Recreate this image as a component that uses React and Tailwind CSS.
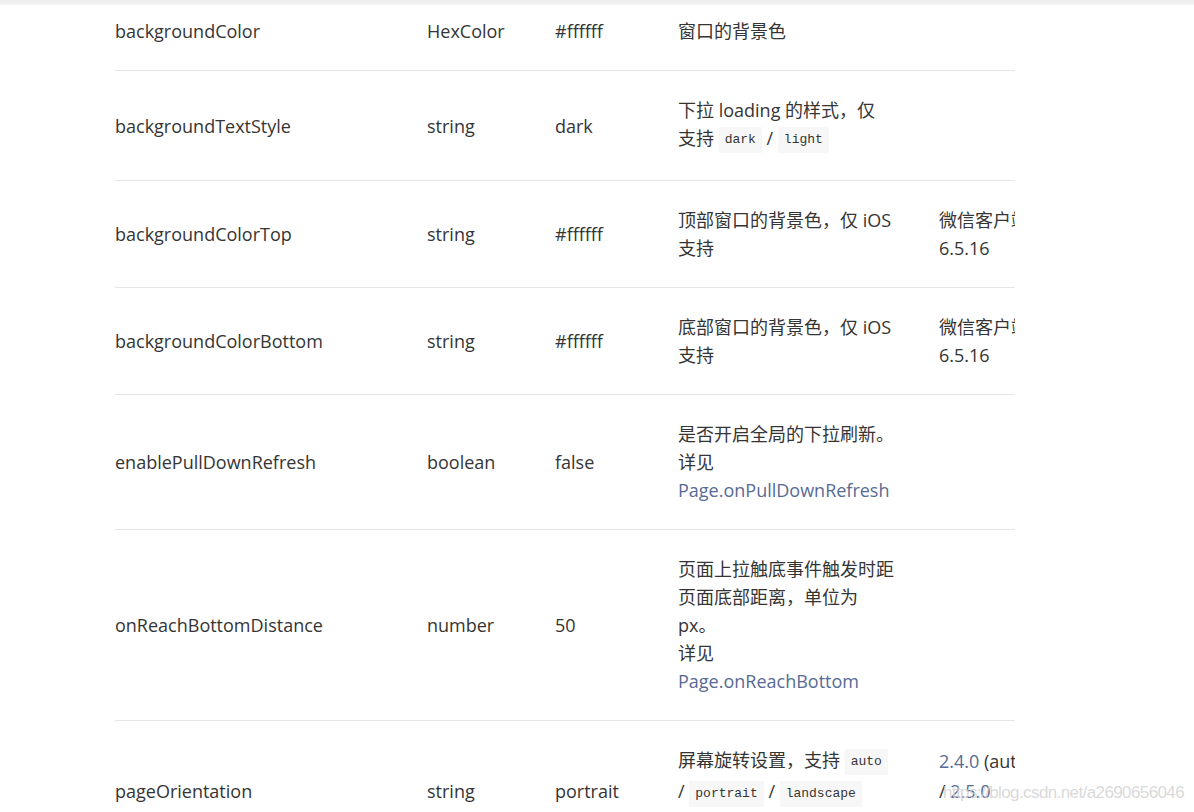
import React from "react";

const Code = ({ children }) => (
  <code className="inline-block my-[2px] h-[26px] px-[6px] leading-[26px] bg-[#f7f7f7] text-[13px] text-[#353535] font-['Liberation_Mono',monospace] align-middle">
    {children}
  </code>
);

const Link = ({ children }) => <span className="text-[#576b95]">{children}</span>;

const rows = [
  {
    name: "backgroundColor",
    type: "HexColor",
    def: "#ffffff",
    desc: ["窗口的背景色"],
    first: true,
  },
  {
    name: "backgroundTextStyle",
    type: "string",
    def: "dark",
    desc: [
      "下拉 loading 的样式，仅",
      <>
        支持 <Code>dark</Code> / <Code>light</Code>
      </>,
    ],
  },
  {
    name: "backgroundColorTop",
    type: "string",
    def: "#ffffff",
    desc: ["顶部窗口的背景色，仅 iOS", "支持"],
    ver: ["微信客户端", "6.5.16"],
  },
  {
    name: "backgroundColorBottom",
    type: "string",
    def: "#ffffff",
    desc: ["底部窗口的背景色，仅 iOS", "支持"],
    ver: ["微信客户端", "6.5.16"],
  },
  {
    name: "enablePullDownRefresh",
    type: "boolean",
    def: "false",
    desc: ["是否开启全局的下拉刷新。", "详见", <Link>Page.onPullDownRefresh</Link>],
  },
  {
    name: "onReachBottomDistance",
    type: "number",
    def: "50",
    desc: [
      "页面上拉触底事件触发时距",
      "页面底部距离，单位为",
      "px。",
      "详见",
      <Link>Page.onReachBottom</Link>,
    ],
  },
  {
    name: "pageOrientation",
    type: "string",
    def: "portrait",
    desc: [
      <>
        屏幕旋转设置，支持 <Code>auto</Code>
      </>,
      <>
        / <Code>portrait</Code> / <Code>landscape</Code>
      </>,
      <>
        详见 <Link>响应显示区域变化</Link>
      </>,
    ],
    ver: [
      <>
        <Link>2.4.0</Link> (auto)
      </>,
      <>
        / <Link>2.5.0</Link>
      </>,
      "(landscape)",
    ],
  },
];

export default function App() {
  return (
    <div className="relative min-h-[812px] bg-white text-[18px] text-[#353535] font-['Open_Sans','Noto_Sans_CJK_SC',sans-serif] overflow-hidden">
      <div className="h-[5px] bg-gradient-to-b from-[#ececec] to-[#f6f6f6]" />
      <div className="ml-[115px] w-[900px] overflow-hidden">
        {rows.map((r, i) => (
          <div
            key={i}
            className={`grid grid-cols-[312px_128px_123px_261px_220px] items-center border-b border-[#e5e5e5] leading-[28px] ${
              r.first ? "pt-[12px] pb-[25px]" : "py-[25px]"
            }`}
          >
            <div>{r.name}</div>
            <div>{r.type}</div>
            <div>{r.def}</div>
            <div className="whitespace-nowrap">
              {r.desc.map((d, j) => (
                <div key={j}>{d}</div>
              ))}
            </div>
            <div className="self-start whitespace-nowrap">
              {(r.ver || []).map((d, j) => (
                <div key={j} className={r.ver.length === 3 && j < 2 ? "leading-[30px]" : ""}>
                  {d}
                </div>
              ))}
            </div>
          </div>
        ))}
      </div>
      <div className="absolute left-[943px] top-[780px] text-[17px] tracking-[-0.6px] text-[#cfcfcf]/80 font-['Liberation_Sans',sans-serif] whitespace-nowrap">
        https://blog.csdn.net/a2690656046
      </div>
    </div>
  );
}
